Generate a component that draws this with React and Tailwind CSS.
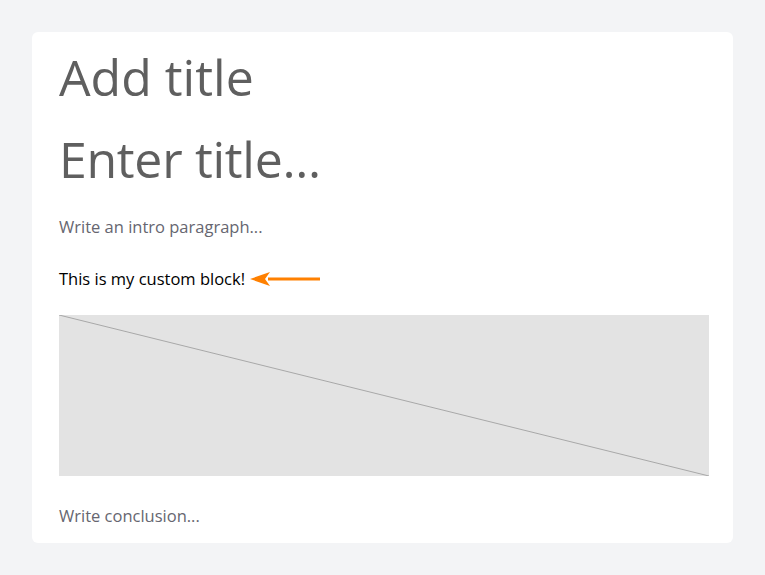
export default function App() {
  return (
    <div className="min-h-screen w-full bg-[#f3f4f6] pt-8 pl-8" style={{ fontFamily: '"Open Sans", "Noto Sans", sans-serif' }}>
      <div className="w-[701px] h-[511px] bg-white rounded-md px-[27px] pt-[15px]">
        <div className="text-[50px] leading-[60px] text-[#5f5f5f]">Add title</div>
        <div className="mt-[22px] text-[50px] leading-[60px] text-[#5f5f5f] tracking-[-0.3px]">Enter title...</div>
        <div className="mt-[26px] text-[16.5px] leading-[24px] text-[#666670]">Write an intro paragraph...</div>
        <div className="mt-[28px] flex items-center text-[16.5px] leading-[24px] text-black">
          <span>This is my custom block!</span>
          <svg width="74" height="18" viewBox="0 0 74 18" className="ml-[3px]">
            <path d="M20 9 H72" stroke="#ff8000" strokeWidth="3.2" fill="none" />
            <path d="M2 9 L22 2 L17 9 L22 16 Z" fill="#ff8000" />
          </svg>
        </div>
        <div className="mt-[24px] h-[161px] w-[650px] bg-[#e3e3e3] relative">
          <svg className="absolute inset-0" width="650" height="161" viewBox="0 0 650 161">
            <line x1="0" y1="0" x2="650" y2="161" stroke="#a8a8a8" strokeWidth="1" />
          </svg>
        </div>
        <div className="mt-[28px] text-[16.5px] leading-[24px] text-[#666670]">Write conclusion...</div>
      </div>
    </div>
  );
}
